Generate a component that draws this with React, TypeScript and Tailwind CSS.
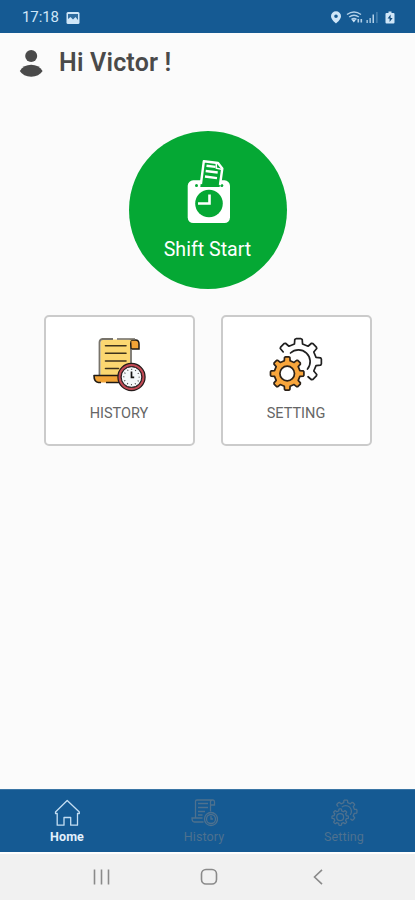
import React from "react";

type GearArc = { cx: number; cy: number; tip: number; root: number; from: number; to: number; closed?: boolean };

function gearPath({ cx, cy, tip, root, from, to, closed }: GearArc): string {
  const pts: string[] = [];
  const add = (r: number, deg: number) => {
    const a = (deg * Math.PI) / 180;
    pts.push(`${(cx + r * Math.cos(a)).toFixed(2)} ${(cy + r * Math.sin(a)).toFixed(2)}`);
  };
  for (let k = from; k <= to; k++) {
    const c = k * 45;
    add(root, c - 13);
    add(tip - 0.6, c - 9.5);
    add(tip, c - 6);
    add(tip, c + 6);
    add(tip - 0.6, c + 9.5);
    add(root, c + 13);
  }
  return "M" + pts.join("L") + (closed ? "Z" : "");
}

const fullGear = gearPath({ cx: 20.2, cy: 38.5, tip: 16.8, root: 13, from: 0, to: 7, closed: true });
const backGear = gearPath({ cx: 31.5, cy: 26.5, tip: 23, root: 18, from: -3, to: 1 });

function StatusBar() {
  return (
    <div className="flex h-[33px] shrink-0 items-center bg-[#155a93] pl-[22px] pr-[19px] pt-[2px] text-[#cfe6f8]">
      <span className="w-[44px] text-[15px] tracking-[-0.1px]">17:18</span>
      <svg width="14" height="12" viewBox="0 0 14 12">
        <rect x="0.5" y="0" width="13" height="12" rx="1.5" fill="currentColor" />
        <rect x="2" y="2" width="10" height="8" fill="#2f6c9f" />
        <path d="M2 10V7l2.500-2 2.500 2.500L9.500 5 12 8v2z" fill="currentColor" />
      </svg>
      <svg className="ml-auto" width="66" height="16" viewBox="330 10 66 16">
        <path d="M336 11.200a5 5 0 0 0-5 5c0 3.300 5 7.300 5 7.300s5-4 5-7.300a5 5 0 0 0-5-5zm0 3.200a1.800 1.800 0 1 1 0 3.600 1.800 1.800 0 0 1 0-3.600z" fill="currentColor" fillRule="evenodd" />
        <g fill="none" stroke="currentColor" strokeWidth="1.500" opacity=".85">
          <path d="M347 14.500q7-5 14 0M349.200 17q4.800-3.500 9.600 0M351.500 19.300q2.500-1.800 5 0" />
          <path d="M358.300 22.500v-3.500M361.300 19v3.500" strokeWidth="1.600" />
        </g>
        <path d="M353.800 22.500l-2.300-3h4.600z" fill="currentColor" />
        <path d="M366.500 20h1.300v3h-1.300zM369.500 18h1.300v5h-1.300zM372.500 14.500h1.500V23h-1.500z" fill="currentColor" opacity=".85" />
        <path d="M376.300 12h1.200v11h-1.200z" fill="currentColor" opacity=".35" />
        <path d="M386.500 13h2v-1.500h3V13h2q1 0 1 1v8.500q0 1-1 1h-7q-1 0-1-1V14q0-1 1-1z" fill="currentColor" />
        <path d="M390.600 14.500l-3 4h2v3.500l3-4h-2z" fill="#124d80" />
      </svg>
    </div>
  );
}

function TimeClockIcon() {
  return (
    <svg width="46" height="66" viewBox="185 158 46 66" className="block">
      <rect x="187.700" y="180.300" width="42.300" height="42.700" rx="5.500" fill="#fff" />
      <circle cx="209" cy="203.500" r="13.800" fill="#05a834" />
      <path d="M209.500 194.500V203.500H198" fill="none" stroke="#fff" strokeWidth="2.600" />
      <circle cx="196.500" cy="185.500" r="1.500" fill="#05a834" />
      <circle cx="221.800" cy="185.500" r="1.500" fill="#05a834" />
      <path d="M200.300 187 L203.600 161.500 L218.200 163.500 L222 168 L219.600 187Z" fill="#05a834" />
      <path d="M200.900 184 L203.800 161.300 L218 163 L222.300 168.500 L220 185" fill="none" stroke="#fff" strokeWidth="2.400" strokeLinejoin="round" />
      <path d="M206.500 165.700l9 1.200M205.700 171l12 1.500M205 176.500l12 1.600" fill="none" stroke="#fff" strokeWidth="2.400" />
      <path d="M216.300 163.500v4.700l5 1" fill="none" stroke="#fff" strokeWidth="1.500" />
    </svg>
  );
}

function HistoryIcon() {
  return (
    <svg width="56" height="58" viewBox="91 335 56 58" className="block">
      <path d="M130.500 340h5q3.500 0 3.500 4v5h-8z" fill="#f2a437" stroke="#1f1a14" strokeWidth="1.500" />
      <path d="M100.500 376V343q0-3.500 3.500-3.500h28q-2 .8-2 4V376z" fill="#fbd771" />
      <path d="M99.500 375V342.500q0-3 3-3.500H113" fill="none" stroke="#77736a" strokeWidth="1.800" />
      <path d="M117 339h18" fill="none" stroke="#77736a" strokeWidth="1.600" />
      <path d="M131 349V364" stroke="#77736a" strokeWidth="1.800" />
      <path d="M94 375.500h24v7H98.500q-4.500 0-4.500-7z" fill="#f2a437" />
      <path d="M101 382.500H98.500q-4.500-.5-4.500-7h24M106 382.500h14" fill="none" stroke="#1f1a14" strokeWidth="1.600" strokeLinejoin="round" />
      <path d="M105.500 345.700h20.500M105.500 353.200h20.500M105.500 361h20.500M105.500 368.500h13" stroke="#3d321c" strokeWidth="1.600" strokeLinecap="round" />
      <circle cx="131.500" cy="377" r="12" fill="#fff" stroke="#241b1b" strokeWidth="4.400" />
      <circle cx="131.500" cy="377" r="11.900" fill="none" stroke="#c24a55" strokeWidth="2.100" />
      <circle cx="131.500" cy="377" r="10.300" fill="#f4f8fa" stroke="#271e20" strokeWidth="1" />
      <circle cx="131.500" cy="377" r="7.700" fill="none" stroke="#444" strokeWidth="1.300" strokeDasharray="1 3.031" strokeDashoffset=".5" />
      <path d="M131.500 371.500v5.800h2.700" fill="none" stroke="#151515" strokeWidth="1.700" />
    </svg>
  );
}

function SettingIcon() {
  return (
    <svg width="58" height="58" viewBox="0 0 58 58" className="block">
      <path d={backGear} fill="none" stroke="#202020" strokeWidth="1.700" strokeLinejoin="round" strokeLinecap="round" />
      <path d="M23.500 18A11.700 11.700 0 0 1 40.500 34" fill="none" stroke="#202020" strokeWidth="1.700" strokeLinecap="round" />
      <path d={fullGear} fill="#f9a63c" stroke="#2b2118" strokeWidth="1.700" strokeLinejoin="round" />
      <circle cx="20.200" cy="38.500" r="7.300" fill="#fff" stroke="#2b2118" strokeWidth="1.700" />
    </svg>
  );
}

function HomeNavIcon() {
  return (
    <svg width="28" height="28" viewBox="53 798.5 28 28" className="block">
      <path d="M67.200 800L79.300 811.500V813H77.500V824.700H70.700V817H64V824.700H57.200V813H55.500V811.500Z" fill="none" stroke="#c3ddf2" strokeWidth="1.300" strokeLinejoin="round" />
    </svg>
  );
}

function HistoryNavIcon() {
  return (
    <svg width="28" height="28" viewBox="90 337 56 56" className="block" fill="none" stroke="#4e718f" strokeWidth="2.600">
      <path d="M101 375V342q0-3 3-3h32q3 0 3 4v6h-8v13M131 349v-6q0-4 4-4M115 375H94q0 8 5 8h18M106 346h20M106 354h20M106 362h14M106 369h9" />
      <circle cx="132" cy="377" r="13" />
      <circle cx="132" cy="377" r="9" />
      <path d="M132 371v6h4" />
    </svg>
  );
}

function SettingNavIcon() {
  return (
    <svg width="27" height="28" viewBox="1.5 2 55 56" className="block" fill="none" stroke="#4e718f" strokeWidth="2.600" strokeLinejoin="round">
      <path d={backGear} />
      <path d={fullGear} />
      <path d="M23.500 18A11.700 11.700 0 0 1 40.500 34" />
      <circle cx="20.200" cy="38.500" r="7" />
    </svg>
  );
}

function Card({ label, icon }: { label: string; icon: React.ReactNode }) {
  return (
    <button className="flex h-[131px] w-[151px] flex-col items-center rounded-[5px] border-2 border-[#cbcbcb] bg-white pt-[18px]">
      <span className="flex h-[58px] items-center">{icon}</span>
      <span className="mt-[11px] text-[14.5px] leading-[20px] text-[#666]">{label}</span>
    </button>
  );
}

function NavItem({ label, icon, active }: { label: string; icon: React.ReactNode; active?: boolean }) {
  return (
    <button className="flex w-[60px] flex-col items-center pt-[9px]">
      {icon}
      <span className={active ? "mt-[2px] text-[12.5px] font-bold leading-[16px] tracking-[0.1px] text-[#e3f1fc]" : "mt-[2px] text-[12.5px] leading-[16px] tracking-[0.1px] text-[#4e718f]"}>{label}</span>
    </button>
  );
}

export default function App() {
  return (
    <div className="flex h-[900px] w-[415px] flex-col overflow-hidden bg-[#fbfbfb] font-['Roboto',sans-serif]">
      <StatusBar />
      <header className="flex h-[58px] items-center pl-[19px] pt-[2px]">
        <svg width="25" height="28" viewBox="19 49.5 25 28" className="block">
          <circle cx="31.200" cy="56.500" r="6" fill="#4a4a4a" />
          <path d="M19.800 71.500q4-6.300 11.400-6.300t11.400 6.300q-3.500 5.700-11.400 5.700t-11.400-5.700z" fill="#4a4a4a" />
        </svg>
        <h1 className="ml-[15px] text-[25px] font-semibold leading-[30px] tracking-[0.2px] text-[#4a4a4a]">Hi Victor !</h1>
      </header>
      <main className="flex flex-1 flex-col items-center pt-[40px]">
        <button className="flex h-[158px] w-[158px] flex-col items-center rounded-full bg-[#05a834] pt-[27px]">
          <TimeClockIcon />
          <span className="mt-[14px] text-[19.6px] leading-[24px] text-white">Shift Start</span>
        </button>
        <div className="mt-[26px] flex gap-[26px]">
          <Card label="HISTORY" icon={<HistoryIcon />} />
          <Card label="SETTING" icon={<SettingIcon />} />
        </div>
      </main>
      <nav className="flex h-[63px] shrink-0 border-t border-[#3a75a5] bg-[#155a93] pl-[37px]">
        <NavItem label="Home" icon={<HomeNavIcon />} active />
        <div className="ml-[77px] mr-[80px]">
          <NavItem label="History" icon={<HistoryNavIcon />} />
        </div>
        <NavItem label="Setting" icon={<SettingNavIcon />} />
      </nav>
      <div className="flex h-[48px] shrink-0 items-center border-t-2 border-white bg-[#f1f1f1] pl-[93px]">
        <svg width="17" height="16" viewBox="0 0 17 16"><path d="M1.500.5v15M8.500.5v15M15.500.5v15" stroke="#8a8a8a" strokeWidth="1.600" /></svg>
        <svg className="ml-[90px] mr-[95px]" width="18" height="18" viewBox="0 0 18 18"><rect x="1.500" y="1.500" width="15" height="14.500" rx="4.500" fill="none" stroke="#8a8a8a" strokeWidth="1.600" /></svg>
        <svg width="10" height="16" viewBox="0 0 10 16"><path d="M9 .8L1.500 8 9 15.200" fill="none" stroke="#8a8a8a" strokeWidth="1.600" /></svg>
      </div>
    </div>
  );
}
